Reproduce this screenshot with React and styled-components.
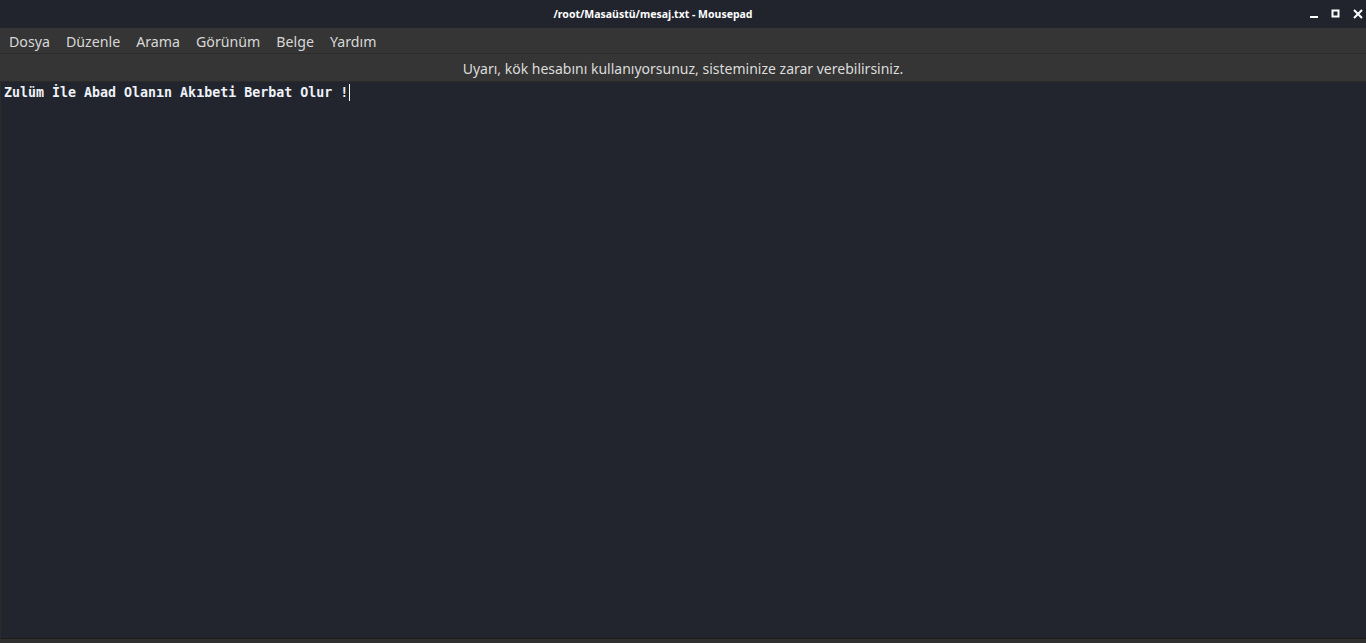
import React from 'react'
import styled, { createGlobalStyle } from 'styled-components'

const GlobalStyle = createGlobalStyle`
  html, body { margin: 0; padding: 0; background: #22252e; }
  body { font-family: "Noto Sans", "Open Sans", sans-serif; }
  #root { height: 643px; }
`

const menus = ['Dosya', 'Düzenle', 'Arama', 'Görünüm', 'Belge', 'Yardım']

function App() {
  return (
    <Window>
      <GlobalStyle />
      <TitleBar>
        <Title>/root/Masaüstü/mesaj.txt - Mousepad</Title>
        <Controls>
          <CtrlButton aria-label="minimize">
            <svg width="10" height="10" viewBox="0 0 10 10">
              <rect x="1" y="7" width="8" height="2" fill="#fff" />
            </svg>
          </CtrlButton>
          <CtrlButton aria-label="maximize">
            <svg width="10" height="10" viewBox="0 0 10 10">
              <rect x="1.5" y="1.5" width="6" height="6" fill="none" stroke="#fff" strokeWidth="2" />
            </svg>
          </CtrlButton>
          <CtrlButton aria-label="close">
            <svg width="10" height="10" viewBox="0 0 10 10">
              <path d="M1 1 L9 9 M9 1 L1 9" stroke="#fff" strokeWidth="2" />
            </svg>
          </CtrlButton>
        </Controls>
      </TitleBar>

      <MenuBar>
        {menus.map((m) => (
          <MenuItem key={m}>{m}</MenuItem>
        ))}
      </MenuBar>

      <InfoBar>Uyarı, kök hesabını kullanıyorsunuz, sisteminize zarar verebilirsiniz.</InfoBar>

      <Editor>
        <Line>
          Zulüm İle Abad Olanın Akıbeti Berbat Olur !<Cursor />
        </Line>
      </Editor>

      <StatusStrip />
    </Window>
  )
}

export default App

const Window = styled.div`
  width: 1366px;
  height: 643px;
  display: flex;
  flex-direction: column;
  overflow: hidden;
  background: #22252e;
`

const TitleBar = styled.div`
  height: 28px;
  flex: none;
  background: #21242d;
  display: flex;
  align-items: center;
  justify-content: center;
  position: relative;
`

const Title = styled.div`
  color: #ffffff;
  font-family: "Noto Sans", sans-serif;
  font-weight: bold;
  font-size: 10.5px;
  margin-left: -60px;
`

const Controls = styled.div`
  position: absolute;
  right: 3px;
  top: 9px;
  display: flex;
  gap: 12px;
`

const CtrlButton = styled.div`
  width: 10px;
  height: 10px;
  display: flex;
`

const MenuBar = styled.div`
  height: 25px;
  flex: none;
  background: #353535;
  border-bottom: 1px solid #2c2c2c;
  display: flex;
  align-items: center;
  padding-left: 1px;
`

const MenuItem = styled.div`
  color: #d8d8d8;
  font-size: 14.2px;
  padding: 0 8px;
  margin-top: 2px;
`

const InfoBar = styled.div`
  height: 28px;
  flex: none;
  background: #353535;
  border-bottom: 1px solid #2a2a2a;
  color: #dcdcdc;
  font-size: 14px;
  display: flex;
  align-items: center;
  justify-content: center;
  box-sizing: border-box;
  padding-top: 1px;
`

const Editor = styled.div`
  flex: 1;
  background: #22252e;
  border-left: 1px solid #2b2b2b;
  border-bottom: 1px solid #1b1b1b;
  padding: 2px 3px;
`

const Line = styled.div`
  color: #eef2f8;
  font-family: "DejaVu Sans Mono", monospace;
  font-weight: bold;
  font-size: 13.3px;
  line-height: 17px;
  white-space: pre;
  display: flex;
  align-items: center;
`

const Cursor = styled.span`
  display: inline-block;
  width: 1px;
  height: 17px;
  background: #ffffff;
  margin-left: 1px;
`

const StatusStrip = styled.div`
  height: 4px;
  flex: none;
  background: #303030;
`
